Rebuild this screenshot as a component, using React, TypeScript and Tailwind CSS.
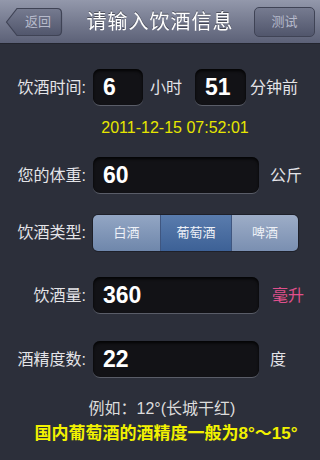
import React from "react";

const FONT = { fontFamily: '"Liberation Sans", "Noto Sans CJK SC", sans-serif' };

function Field({ value, w }: { value: string; w: string }) {
  return (
    <div
      className={`${w} h-[37px] rounded-[7px] bg-[#121216] border-b border-[#5a5d68] shadow-[inset_0_2px_3px_rgba(0,0,0,0.8)] flex items-center pl-[10px] text-white text-[23px] font-bold`}
    >
      {value}
    </div>
  );
}

export default function App() {
  return (
    <div className="w-[320px] h-[460px] bg-[#2c2f3a] overflow-hidden flex flex-col" style={FONT}>
      {/* Header */}
      <div className="h-[44px] shrink-0 bg-gradient-to-b from-[#9398ab] to-[#5c6177] border-b border-[#23252e] flex items-center justify-between px-[5px] relative">
        <div className="relative w-[58px] h-[30px] flex items-center justify-center">
          <svg className="absolute inset-0" width="58" height="30" viewBox="0 0 58 30">
            <defs>
              <linearGradient id="bb" x1="0" y1="0" x2="0" y2="1">
                <stop offset="0" stopColor="#767b90" />
                <stop offset="1" stopColor="#51566c" />
              </linearGradient>
            </defs>
            <path d="M1.5 15 L12 1.5 L52 1.5 Q56.5 1.5 56.5 6 L56.5 24 Q56.5 28.5 52 28.5 L12 28.5 Z" fill="url(#bb)" stroke="#3f4355" strokeWidth="1.2" />
          </svg>
          <span className="relative text-[13px] text-[#b6bacb] pl-[8px]">返回</span>
        </div>
        <div className="absolute left-0 right-0 top-0 h-[44px] flex items-center justify-center pointer-events-none">
          <span className="text-white text-[20px] tracking-[1px] drop-shadow-[0_-1px_0_rgba(0,0,0,0.4)]">请输入饮酒信息</span>
        </div>
        <div className="w-[61px] h-[30px] rounded-[5px] border border-[#3f4355] bg-gradient-to-b from-[#767b90] to-[#51566c] flex items-center justify-center text-[13px] text-[#b6bacb]">
          测试
        </div>
      </div>

      {/* Row 1 */}
      <div className="mt-[25px] flex items-center h-[37px]">
        <div className="w-[86px] text-right text-[16px] text-[#e4e4e8]">饮酒时间:</div>
        <div className="ml-[7px]"><Field value="6" w="w-[50px]" /></div>
        <div className="ml-[7px] text-[16px] text-[#e4e4e8]">小时</div>
        <div className="ml-[13px]"><Field value="51" w="w-[51px]" /></div>
        <div className="ml-[4px] text-[16px] text-[#e4e4e8]">分钟前</div>
      </div>

      <div className="mt-[12px] h-[20px] flex items-center justify-center pl-[30px] text-[16px] text-[#e6e600]">
        2011-12-15 07:52:01
      </div>

      {/* Weight */}
      <div className="mt-[19px] flex items-center h-[37px]">
        <div className="w-[86px] text-right text-[16px] text-[#e4e4e8]">您的体重:</div>
        <div className="ml-[7px]"><Field value="60" w="w-[166px]" /></div>
        <div className="ml-[11px] text-[16px] text-[#e4e4e8]">公斤</div>
      </div>

      {/* Type */}
      <div className="mt-[20px] flex items-center h-[38px]">
        <div className="w-[86px] text-right text-[16px] text-[#e4e4e8]">饮酒类型:</div>
        <div className="ml-[6px] w-[207px] h-[38px] rounded-[6px] overflow-hidden flex border border-[#1e2029] text-[13px] text-[#eef1f7]">
          <div className="w-[68px] flex items-center justify-center bg-gradient-to-b from-[#93a6c4] to-[#6f87ab] border-r border-[#3f5680]">白酒</div>
          <div className="w-[71px] flex items-center justify-center bg-gradient-to-b from-[#5a7cad] to-[#3d6196] border-r border-[#3f5680]">葡萄酒</div>
          <div className="flex-1 flex items-center justify-center bg-gradient-to-b from-[#9dadc7] to-[#7a8fb1]">啤酒</div>
        </div>
      </div>

      {/* Amount */}
      <div className="mt-[25px] flex items-center h-[37px]">
        <div className="w-[86px] text-right text-[16px] text-[#e4e4e8]">饮酒量:</div>
        <div className="ml-[7px]"><Field value="360" w="w-[166px]" /></div>
        <div className="ml-[13px] text-[16px] text-[#e0508c]">毫升</div>
      </div>

      {/* Degree */}
      <div className="mt-[27px] flex items-center h-[37px]">
        <div className="w-[86px] text-right text-[16px] text-[#e4e4e8]">酒精度数:</div>
        <div className="ml-[7px]"><Field value="22" w="w-[166px]" /></div>
        <div className="ml-[11px] text-[16px] text-[#e4e4e8]">度</div>
      </div>

      <div className="mt-[21px] h-[20px] flex items-center justify-center pl-[4px] text-[16px] text-[#dcdcdc]">
        例如：12°(长城干红)
      </div>
      <div className="mt-[5px] h-[20px] flex items-center justify-center pl-[12px] text-[17px] font-bold text-[#f2f200]">
        国内葡萄酒的酒精度一般为8°～15°
      </div>
    </div>
  );
}
